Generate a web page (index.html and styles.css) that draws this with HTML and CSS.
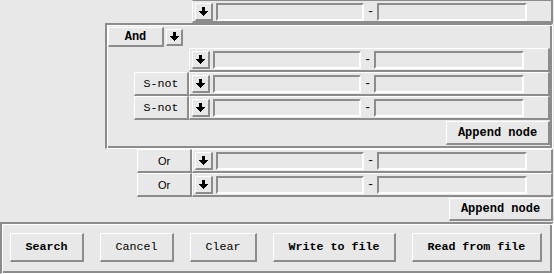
FILE: index.html
```html
<!DOCTYPE html>
<html lang="en">
<head>
    <meta charset="UTF-8">
    <meta name="viewport" content="width=device-width, initial-scale=1.0">
    <title>Query</title>
    <link rel="stylesheet" href="styles.css">
</head>
<body>
    <div class="query">
        <div class="line">
            <div class="term first">
                <button class="drop"><svg width="9" height="10" viewBox="0 0 9 10"><rect x="3" y="0" width="3" height="5"/><polygon points="0,4 9,4 4.5,9.5"/></svg></button>
                <input class="entry lo" type="text">
                <span class="dash">-</span>
                <input class="entry hi" type="text">
            </div>
        </div>

        <!-- And group -->
        <div class="group">
            <div class="group-head">
                <button class="op">And</button>
                <button class="drop small"><svg width="9" height="10" viewBox="0 0 9 10"><rect x="3" y="0" width="3" height="5"/><polygon points="0,4 9,4 4.5,9.5"/></svg></button>
            </div>
            <div class="line">
                <div class="term">
                    <button class="drop"><svg width="9" height="10" viewBox="0 0 9 10"><rect x="3" y="0" width="3" height="5"/><polygon points="0,4 9,4 4.5,9.5"/></svg></button>
                    <input class="entry lo" type="text">
                    <span class="dash">-</span>
                    <input class="entry hi" type="text">
                </div>
            </div>
            <div class="line">
                <span class="cell">S-not</span>
                <div class="term">
                    <button class="drop"><svg width="9" height="10" viewBox="0 0 9 10"><rect x="3" y="0" width="3" height="5"/><polygon points="0,4 9,4 4.5,9.5"/></svg></button>
                    <input class="entry lo" type="text">
                    <span class="dash">-</span>
                    <input class="entry hi" type="text">
                </div>
            </div>
            <div class="line">
                <span class="cell">S-not</span>
                <div class="term">
                    <button class="drop"><svg width="9" height="10" viewBox="0 0 9 10"><rect x="3" y="0" width="3" height="5"/><polygon points="0,4 9,4 4.5,9.5"/></svg></button>
                    <input class="entry lo" type="text">
                    <span class="dash">-</span>
                    <input class="entry hi" type="text">
                </div>
            </div>
            <div class="foot">
                <button class="append">Append node</button>
            </div>
        </div>

        <div class="line">
            <span class="cell or">Or</span>
            <div class="term">
                <button class="drop"><svg width="9" height="10" viewBox="0 0 9 10"><rect x="3" y="0" width="3" height="5"/><polygon points="0,4 9,4 4.5,9.5"/></svg></button>
                <input class="entry lo" type="text">
                <span class="dash">-</span>
                <input class="entry hi" type="text">
            </div>
        </div>
        <div class="line">
            <span class="cell or">Or</span>
            <div class="term">
                <button class="drop"><svg width="9" height="10" viewBox="0 0 9 10"><rect x="3" y="0" width="3" height="5"/><polygon points="0,4 9,4 4.5,9.5"/></svg></button>
                <input class="entry lo" type="text">
                <span class="dash">-</span>
                <input class="entry hi" type="text">
            </div>
        </div>
        <div class="foot outer">
            <button class="append">Append node</button>
        </div>
    </div>

    <div class="actions">
        <button class="act bold">Search</button>
        <button class="act">Cancel</button>
        <button class="act">Clear</button>
        <button class="act bold">Write to file</button>
        <button class="act bold">Read from file</button>
    </div>
</body>
</html>
```

FILE: styles.css
```css
:root {
    --bg: #e8e8e8;
    --light: #ffffff;
    --dark: #8c8c8c;
}

* {
    box-sizing: border-box;
}

body {
    margin: 0;
    width: 554px;
    height: 274px;
    overflow: hidden;
    background: var(--bg);
    color: #000;
    font-family: "Liberation Mono", "DejaVu Sans Mono", monospace;
    font-size: 11.67px;
}

button,
input {
    font: inherit;
    color: inherit;
    margin: 0;
}

/* raised / sunken reliefs */
.drop,
.op,
.append,
.act,
.cell,
.term {
    background: var(--bg);
    border-style: solid;
    border-width: 1px 2px 2px 1px;
    border-color: var(--light) var(--dark) var(--dark) var(--light);
}

/* query tree */
.query {
    width: 553px;
    display: flex;
    flex-direction: column;
}

.line {
    display: flex;
    justify-content: flex-end;
}

.term {
    width: 361px;
    height: 24px;
    display: flex;
    align-items: flex-start;
    padding: 2px 0 0 2px;
}

.term.first {
    height: 23px;
    border-top-color: var(--dark);
}

.drop {
    width: 18px;
    height: 18px;
    padding: 0;
    display: flex;
    align-items: center;
    justify-content: center;
}

.drop svg {
    display: block;
    fill: #000;
    shape-rendering: crispEdges;
}

.drop.small {
    width: 17px;
    height: 17px;
}

.entry {
    width: 148px;
    height: 18px;
    margin-left: 3px;
    padding: 0;
    background: var(--bg);
    border: 2px solid;
    border-color: var(--dark) var(--light) var(--light) var(--dark);
    outline: none;
}

.entry.hi {
    width: 150px;
    margin-left: 0;
}

.dash {
    width: 13px;
    line-height: 18px;
    text-align: center;
    font-size: 12px;
}

.cell {
    width: 55px;
    height: 24px;
    display: flex;
    align-items: center;
    justify-content: center;
}

.cell.or {
    font-family: "Liberation Sans", Arial, sans-serif;
    font-size: 11px;
}

/* grouped nodes */
.group {
    align-self: flex-end;
    width: 448px;
    height: 126px;
    display: flex;
    flex-direction: column;
    padding: 1px 2px 2px 1px;
    border-style: solid;
    border-width: 2px 1px 1px 2px;
    border-color: var(--dark) var(--light) var(--light) var(--dark);
    box-shadow: inset 1px 1px 0 var(--light), inset -2px -2px 0 var(--dark);
}

.group-head {
    height: 22px;
    display: flex;
    align-items: center;
    gap: 2px;
}

.op {
    width: 56px;
    height: 20px;
    padding: 0;
    font-weight: bold;
    font-size: 12px;
}

.foot {
    display: flex;
    justify-content: flex-end;
    padding: 1px 0;
}

.append {
    width: 104px;
    height: 24px;
    padding: 0;
    font-weight: bold;
    font-size: 12px;
}

.foot.outer .append {
    height: 23px;
}

/* bottom button bar */
.actions {
    width: 554px;
    height: 52px;
    display: flex;
    align-items: flex-start;
    gap: 16px;
    padding: 9px 0 0 8px;
    border-style: solid;
    border-width: 2px 2px 1px 2px;
    border-color: var(--dark) var(--light) var(--light) var(--dark);
    box-shadow: inset 1px 1px 0 var(--light), inset -2px -2px 0 var(--dark);
}

.act {
    height: 29px;
    padding: 0 14.5px;
}

.act.bold {
    font-weight: bold;
}
```
